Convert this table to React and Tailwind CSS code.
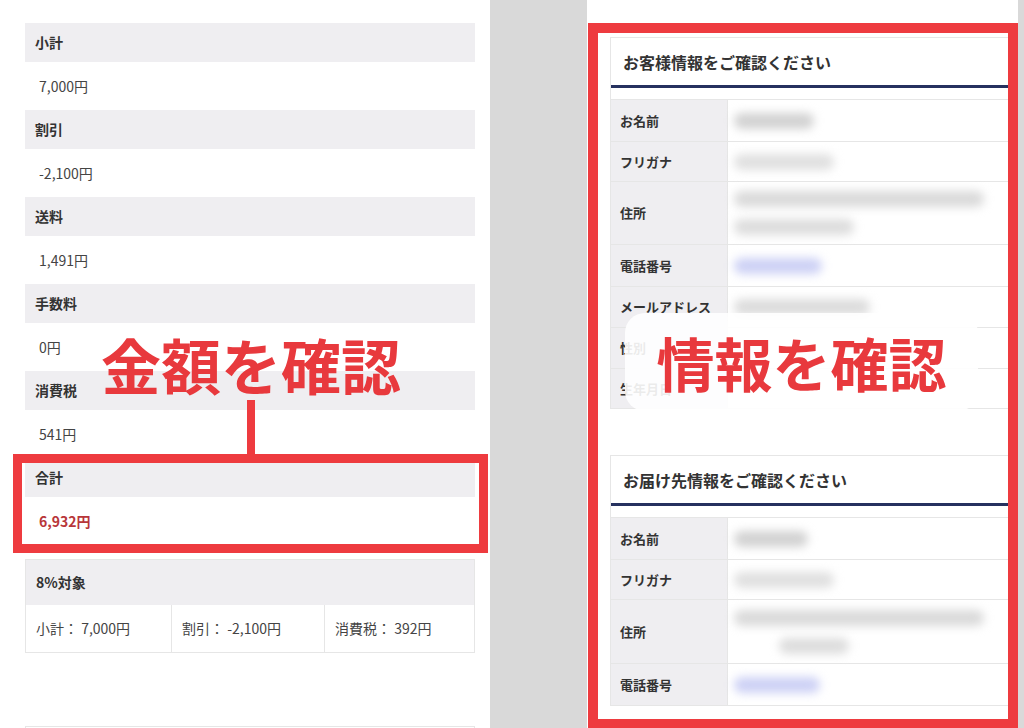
const jp = { fontFamily: '"Noto Sans CJK JP", "Noto Sans", sans-serif' };

const priceRows = [
  { label: '小計', value: '7,000円' },
  { label: '割引', value: '-2,100円' },
  { label: '送料', value: '1,491円' },
  { label: '手数料', value: '0円' },
  { label: '消費税', value: '541円' },
];

const customerRows = [
  { label: 'お名前', h: 'h-[42px]', blobs: [{ w: 'w-[80px]', c: 'bg-[#d2d2d2]' }] },
  { label: 'フリガナ', h: 'h-[40px]', blobs: [{ w: 'w-[100px]', c: 'bg-[#e0e0e0]' }] },
  { label: '住所', h: 'h-[63px]', blobs: [{ w: 'w-[250px]', c: 'bg-[#dadada]' }, { w: 'w-[120px]', c: 'bg-[#dddddd]' }] },
  { label: '電話番号', h: 'h-[42px]', blobs: [{ w: 'w-[88px]', c: 'bg-[#cdd1f5]' }] },
  { label: 'メールアドレス', h: 'h-[41px]', blobs: [{ w: 'w-[136px]', c: 'bg-[#dcdcdc]' }] },
  { label: '性別', h: 'h-[41px]', blobs: [] },
  { label: '生年月日', h: 'h-[40px]', blobs: [] },
];

const deliveryRows = [
  { label: 'お名前', h: 'h-[42px]', blobs: [{ w: 'w-[74px]', c: 'bg-[#d2d2d2]' }] },
  { label: 'フリガナ', h: 'h-[40px]', blobs: [{ w: 'w-[100px]', c: 'bg-[#e0e0e0]' }] },
  { label: '住所', h: 'h-[64px]', blobs: [{ w: 'w-[250px]', c: 'bg-[#dadada]' }, { w: 'w-[70px] ml-[45px]', c: 'bg-[#dddddd]' }] },
  { label: '電話番号', h: 'h-[42px]', blobs: [{ w: 'w-[86px]', c: 'bg-[#cdd1f5]' }] },
];

function InfoCard({ title, rows }) {
  return (
    <div className="border-t border-l border-[#e6e6e6]">
      <div className="h-[47px] flex items-center pl-[12px] text-[16px] font-bold text-[#333]">{title}</div>
      <div className="h-[3px] bg-[#26315f]" />
      <div className="mt-[11px] border-t border-[#e6e6e6]">
        {rows.map((r, i) => (
          <div key={i} className={`flex border-b border-[#e6e6e6] ${r.h}`}>
            <div className="w-[117px] shrink-0 bg-[#efeef1] border-r border-[#e6e6e6] flex items-center pl-[9px] text-[13px] font-bold text-[#333]">
              {r.label}
            </div>
            <div className="flex-1 flex flex-col justify-center gap-[12px] pl-[6px]">
              {r.blobs.map((b, j) => (
                <div key={j} className={`h-[16px] rounded-full blur-[5px] ${b.w} ${b.c}`} />
              ))}
            </div>
          </div>
        ))}
      </div>
    </div>
  );
}

export default function App() {
  return (
    <div className="relative w-[1024px] h-[728px] overflow-hidden flex bg-[#d9d9d9]" style={jp}>
      {/* Left: price summary */}
      <div className="w-[490px] h-full bg-white pl-[25px] pt-[23px]">
        <div className="w-[450px]">
          {priceRows.map((r) => (
            <div key={r.label}>
              <div className="h-[39px] bg-[#efeef1] flex items-center pl-[10px] text-[14px] font-bold text-[#333]">{r.label}</div>
              <div className="h-[48px] flex items-center pl-[14px] text-[14px] text-[#444]">{r.value}</div>
            </div>
          ))}
          <div className="h-[39px] bg-[#efeef1] flex items-center pl-[10px] text-[14px] font-bold text-[#333]">合計</div>
          <div className="h-[48px] flex items-center pl-[14px] text-[14px] font-bold text-[#b8363a]">6,932円</div>

          <div className="mt-[14px] border border-[#e6e6e6]">
            <div className="h-[45px] bg-[#efeef1] flex items-center pl-[10px] text-[14px] font-bold text-[#333]">8%対象</div>
            <div className="grid grid-cols-[146px_153px_1fr] h-[47px] text-[14px] text-[#444]">
              <div className="flex items-center pl-[10px] border-r border-[#e6e6e6]">小計： 7,000円</div>
              <div className="flex items-center pl-[10px] border-r border-[#e6e6e6]">割引： -2,100円</div>
              <div className="flex items-center pl-[10px]">消費税： 392円</div>
            </div>
          </div>

          <div className="mt-[73px] h-[20px] border border-[#e6e6e6]" />
        </div>
      </div>

      {/* Gap */}
      <div className="w-[97px] h-full" />

      {/* Right: customer info */}
      <div className="w-[431px] h-full bg-white pt-[37px] pl-[23px]">
        <InfoCard title="お客様情報をご確認ください" rows={customerRows} />
        <div className="h-[46px]" />
        <InfoCard title="お届け先情報をご確認ください" rows={deliveryRows} />
      </div>

      {/* Annotations */}
      <div className="absolute left-[13px] top-[454px] w-[475px] h-[99px] border-[9px] border-[#ee3b3f]" />
      <div className="absolute left-[247px] top-[400px] w-[8px] h-[56px] bg-[#ee3b3f]" />
      <div className="absolute left-[100px] top-[334px] w-[302px] text-center text-[60px] leading-none font-bold text-[#e8393d] whitespace-nowrap">
        金額を確認
      </div>

      <div className="absolute left-[588px] top-[23px] w-[430px] h-[706px] border-[10px] border-[#ee3b3f]" />
      <div className="absolute left-[625px] top-[313px] w-[353px] h-[98px] rounded-[20px] bg-white/90 flex items-center justify-center">
        <span className="text-[58px] leading-none font-bold text-[#e8393d] whitespace-nowrap">情報を確認</span>
      </div>
    </div>
  );
}
